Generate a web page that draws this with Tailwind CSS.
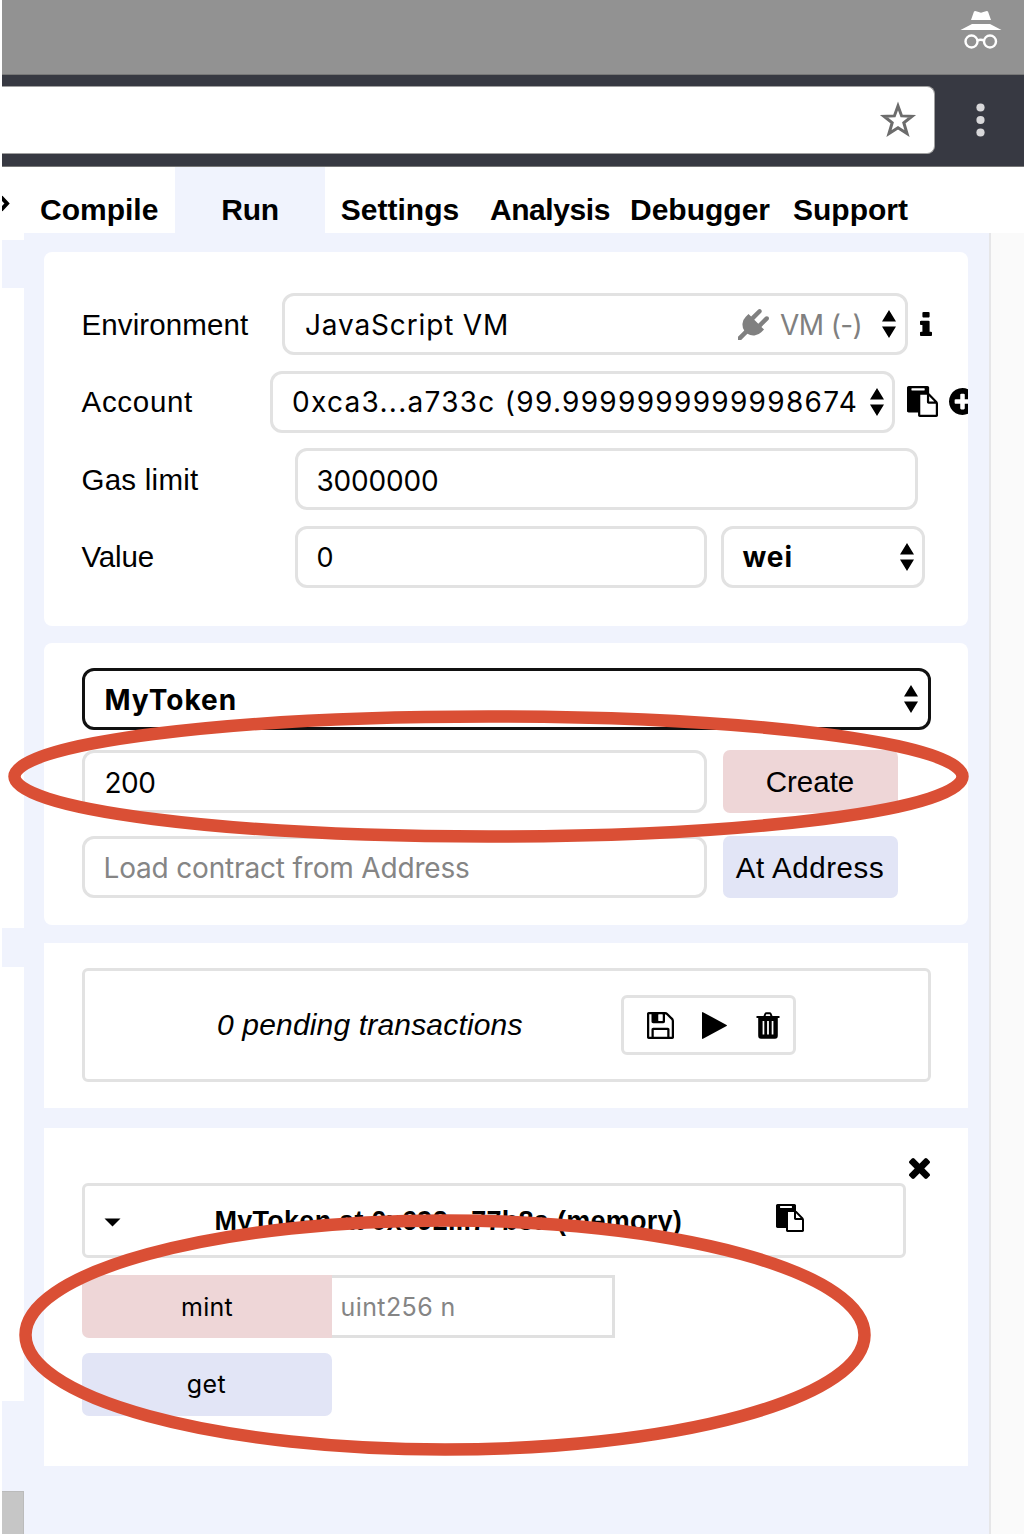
<!DOCTYPE html>
<html lang="en">
<head>
<meta charset="utf-8">
<title>Remix</title>
<script src="https://cdn.jsdelivr.net/npm/@tailwindcss/browser@4"></script>
</head>
<body class="bg-white text-black">
<svg class="hidden">
  <symbol id="sort" viewBox="0 0 14 28"><path d="M7 0L14 11.5H0zM7 28L0 16.5H14z"/></symbol>
  <symbol id="paste" viewBox="0 0 1792 1792"><path d="M768 1664h896v-640h-416q-40 0-68-28t-28-68v-416h-384v1152zm256-1440v-64q0-13-9.5-22.5t-22.5-9.5h-704q-13 0-22.5 9.5t-9.5 22.5v64q0 13 9.5 22.5t22.5 9.5h704q13 0 22.5-9.5t9.5-22.5zm256 672h299l-299-299v299zm512 128v672q0 40-28 68t-68 28h-960q-40 0-68-28t-28-68v-160h-544q-40 0-68-28t-28-68v-1344q0-40 28-68t68-28h1088q40 0 68 28t28 68v328q21 13 36 28l408 408q28 28 48 76t20 88z"/></symbol>
</svg>
<div class="relative flex h-[1534px] w-[1024px] flex-col overflow-hidden pl-[2px]">

  <!-- browser chrome -->
  <div class="flex h-[75px] shrink-0 justify-end border-b border-[#777] bg-[#929292] pt-[10px] pr-[22px]">
    <svg class="h-[40px] w-[42px]" viewBox="0 0 42 40" fill="#fff"><path d="M14 1.5Q15 .5 17 1.5L21 2.700L25 1.500Q27 .5 28 1.500L31 10H11zM12 14H30L41.500 20H.5z"/><g fill="none" stroke="#fff" stroke-width="2.400"><circle cx="11.500" cy="31.500" r="6"/><circle cx="30" cy="31.500" r="6"/><path d="M17.500 30.500Q20.700 29 24 30.500"/></g></svg>
  </div>
  <div class="flex h-[92px] shrink-0 items-center border-b border-[#777] bg-[#373942] pb-[2px]">
    <div class="mt-[1px] flex h-[68px] w-[932.500px] items-center justify-end rounded-r-[8px] border border-l-0 border-[#a0a0a0] bg-white pr-[16.500px]">
      <svg class="h-[38px] w-[38px]" viewBox="0 0 38 38" fill="none" stroke="#6c6c6c" stroke-width="3"><path d="M19 5L22.600 14.900L33 15.300L24.800 21.800L28 32.500L19 26.700L10 32.500L13.200 21.800L5 15.300L15.400 14.900z"/></svg>
    </div>
    <svg class="ml-[41.500px] h-[34px] w-[9px]" viewBox="0 0 9 34" fill="#d8d8da"><circle cx="4.500" cy="4.500" r="4.100"/><circle cx="4.500" cy="17" r="4.100"/><circle cx="4.500" cy="29.500" r="4.100"/></svg>
  </div>

  <!-- tabs -->
  <div class="flex h-[66px] shrink-0 font-['Liberation_Sans',sans-serif] text-[30px] leading-[34px] font-bold whitespace-nowrap">
    <div class="w-[23px] pt-[26px]"><svg class="h-[22px] w-[8px]" viewBox="0 0 8 22" fill="none" stroke="#000" stroke-width="4"><path d="M-1 4L5 10.500L-1 17"/></svg></div>
    <div class="w-[150px] pt-[26px] pl-[15px]">Compile</div>
    <div class="w-[150px] bg-[#f0f3fd] pt-[26px] text-center tracking-[-0.300px]">Run</div>
    <div class="w-[150px] pt-[26px] text-center">Settings</div>
    <div class="w-[150px] pt-[26px] text-center tracking-[-0.400px]">Analysis</div>
    <div class="w-[150px] pt-[26px] text-center">Debugger</div>
    <div class="w-[151px] pt-[26px] text-center">Support</div>
  </div>

  <div class="flex min-h-0 flex-1">
    <!-- editor edge -->
    <div class="flex w-[22px] shrink-0 flex-col bg-[#f0f3fd]">
      <div class="h-[7px] bg-white"></div>
      <div class="mt-[48px] h-[640px] bg-white"></div>
      <div class="mt-[39px] h-[434px] bg-white"></div>
      <div class="mt-[90px] flex-1 border-t border-r border-[#bbb] bg-[#c6c6c6]"></div>
    </div>

    <!-- run panel -->
    <div class="flex w-[965px] shrink-0 flex-col bg-[#f0f3fd] pt-[19px] pl-[20px] font-['Inter',sans-serif] text-[28px] leading-[34px] whitespace-nowrap">

      <section class="flex h-[374px] w-[924px] flex-col gap-[15.600px] overflow-hidden rounded-[8px] bg-white pt-[41px] pl-[37.500px]">
        <div class="flex h-[62px] shrink-0 items-center">
          <div class="w-[200.500px] shrink-0 pt-px font-['Liberation_Sans',sans-serif] text-[29.500px] tracking-[0.100px]">Environment</div>
          <div class="flex h-[62px] w-[626px] shrink-0 items-center rounded-[12px] border-[3px] border-[#e2e2e2] pl-[20px]">
            <span class="w-[433px] shrink-0 pt-px tracking-[0.850px]">JavaScript VM</span>
            <svg class="h-[31px] w-[31px] shrink-0" viewBox="0 0 1792 1792" fill="#808080"><path d="M1755 453q37 38 37 90.500t-37 90.500l-401 400 150 150-160 160q-163 163-389.500 186.500t-411.500-100.500l-362 362h-181v-181l362-362q-124-185-100.500-411.500t186.500-389.500l160-160 150 150 400-401q38-37 91-37t90 37 37 90.500-37 90.500l-400 401 234 234 401-400q38-37 91-37t90 37z"/></svg>
            <span class="ml-[11px] w-[102px] shrink-0 pt-px tracking-[-0.600px] text-[#808080]">VM (-)</span>
            <svg class="h-[28px] w-[14px] shrink-0"><use href="#sort"/></svg>
          </div>
          <svg class="ml-[12px] h-[24px] w-[12px] shrink-0" viewBox="576 128 640 1408" preserveAspectRatio="none"><path d="M1216 1344v128q0 26-19 45t-45 19h-512q-26 0-45-19t-19-45v-128q0-26 19-45t45-19h64v-384h-64q-26 0-45-19t-19-45v-128q0-26 19-45t45-19h384q26 0 45 19t19 45v576h64q26 0 45 19t19 45zm-128-1152v192q0 26-19 45t-45 19h-256q-26 0-45-19t-19-45v-192q0-26 19-45t45-19h256q26 0 45 19t19 45z"/></svg>
        </div>
        <div class="flex h-[62px] shrink-0 items-center">
          <div class="w-[188.500px] shrink-0 pt-px font-['Liberation_Sans',sans-serif] text-[29.500px] tracking-[0.700px]">Account</div>
          <div class="flex h-[62px] w-[625px] shrink-0 items-center rounded-[12px] border-[3px] border-[#e2e2e2] pl-[19px]">
            <span class="w-[578px] shrink-0 pt-px tracking-[1.290px]">0xca3...a733c (99.9999999999998674</span>
            <svg class="h-[28px] w-[14px] shrink-0"><use href="#sort"/></svg>
          </div>
          <svg class="ml-[12px] h-[31px] w-[31px] shrink-0"><use href="#paste"/></svg>
          <svg class="ml-[11px] h-[27px] w-[27px] shrink-0" viewBox="128 128 1536 1536"><path d="M1344 960v-128q0-26-19-45t-45-19h-256v-256q0-26-19-45t-45-19h-128q-26 0-45 19t-19 45v256h-256q-26 0-45 19t-19 45v128q0 26 19 45t45 19h256v256q0 26 19 45t45 19h128q26 0 45-19t19-45v-256h256q26 0 45-19t19-45zm320-64q0 209-103 385.500t-279.500 279.500-385.500 103-385.500-103-279.500-279.500-103-385.500 103-385.500 279.500-279.500 385.500-103 385.500 103 279.500 279.500 103 385.500z"/></svg>
        </div>
        <div class="flex h-[62px] shrink-0 items-center">
          <div class="w-[213px] pt-[2px] font-['Liberation_Sans',sans-serif] text-[29.500px] tracking-[0.250px]">Gas limit</div>
          <div class="flex h-[62px] w-[623px] items-center rounded-[12px] border-[3px] border-[#e2e2e2] pt-[3px] pl-[19px] tracking-[-0.200px]">3000000</div>
        </div>
        <div class="flex h-[62px] shrink-0 items-center">
          <div class="w-[213px] pt-px font-['Liberation_Sans',sans-serif] text-[29.500px] tracking-[-0.150px]">Value</div>
          <div class="flex h-[62px] w-[412px] items-center rounded-[12px] border-[3px] border-[#e2e2e2] pt-[3px] pl-[19px]"><span class="text-[27px]">0</span></div>
          <div class="ml-[14px] flex h-[62px] w-[204px] items-center justify-between rounded-[12px] border-[3px] border-[#e2e2e2] pr-[8px] pl-[19px] font-bold"><span class="tracking-[0.900px]">wei</span><svg class="h-[28px] w-[14px]"><use href="#sort"/></svg></div>
        </div>
      </section>

      <section class="mt-[17px] flex h-[282px] w-[924px] shrink-0 flex-col rounded-[8px] bg-white pt-[25px] pl-[37.500px]">
        <div class="flex h-[62px] w-[849px] items-center justify-between rounded-[12px] border-[3px] border-[#111] pr-[9.500px] pl-[20px] font-bold"><span class="pt-[2px] tracking-[1px]">MyToken</span><svg class="h-[28px] w-[14px]"><use href="#sort"/></svg></div>
        <div class="mt-[20px] flex gap-[16px]">
          <div class="flex h-[63px] w-[625px] items-center rounded-[12px] border-[3px] border-[#e2e2e2] pl-[20px]"><span class="pt-[2px] tracking-[-0.500px]">200</span></div>
          <div class="flex h-[63px] w-[175px] items-center justify-center rounded-[7px] bg-[#eed6d7] pt-px font-['Liberation_Sans',sans-serif] text-[29.500px]">Create</div>
        </div>
        <div class="mt-[23px] flex gap-[16px]">
          <div class="flex h-[62px] w-[625px] items-center rounded-[12px] border-[3px] border-[#e2e2e2] pt-[2px] pl-[19px] tracking-[-0.170px] text-[#858585]">Load contract from Address</div>
          <div class="flex h-[62px] w-[175px] items-center justify-center rounded-[7px] bg-[#e2e5f6] pt-px font-['Liberation_Sans',sans-serif] text-[29.500px] tracking-[0.600px]">At Address</div>
        </div>
      </section>

      <section class="mt-[18px] h-[165px] w-[924px] shrink-0 bg-white pt-[25px] pl-[38px]">
        <div class="flex h-[114px] w-[849px] items-center rounded-[6px] border-[3px] border-[#e2e2e2] pl-[132px]">
          <div class="w-[403.500px] font-['Liberation_Sans',sans-serif] text-[30px] tracking-[0.170px] italic">0 pending transactions</div>
          <div class="flex h-[60px] w-[175px] items-center rounded-[6px] border-[3px] border-[#e2e2e2] pl-[23px]">
            <svg class="h-[27px] w-[27px]" viewBox="128 128 1536 1536"><path d="M512 1536h768v-384h-768v384zm896 0h128v-896q0-14-10-38.500t-20-34.500l-281-281q-10-10-34-20t-39-10v416q0 40-28 68t-68 28h-576q-40 0-68-28t-28-68v-416h-128v1280h128v-416q0-40 28-68t68-28h832q40 0 68 28t28 68v416zm-384-928v-320q0-13-9.500-22.500t-22.500-9.500h-192q-13 0-22.500 9.500t-9.500 22.500v320q0 13 9.500 22.500t22.500 9.500h192q13 0 22.500-9.500t9.500-22.500zm640 32v928q0 40-28 68t-68 28h-1344q-40 0-68-28t-28-68v-1344q0-40 28-68t68-28h928q40 0 88 20t76 48l280 280q28 28 48 76t20 88z"/></svg>
            <svg class="ml-[28px] h-[27px] w-[25px]" viewBox="192 116 1408 1560" preserveAspectRatio="none"><path d="M1576 927l-1328 738q-23 13-39.500 3t-16.500-36v-1472q0-26 16.500-36t39.500 3l1328 738q23 13 23 31t-23 31z"/></svg>
            <svg class="ml-[29px] h-[27px] w-[24px]" viewBox="0 0 24 27"><path fill-rule="evenodd" d="M7.500 4L8.500 1.500Q9 .3 10.500 .3H13.500Q15 .3 15.500 1.500L16.500 4H23.500V6H21.800V23.500Q21.800 26.800 19 26.800H5Q2.200 26.800 2.200 23.500V6H.5V4zM9.600 4H14.400L13.800 2.300H10.200zM6.600 9V22.500H8.300V9zM11.100 9V22.500H12.900V9zM15.700 9V22.500H17.400V9z"/></svg>
          </div>
        </div>
      </section>

      <section class="mt-[20px] flex h-[338px] w-[924px] shrink-0 flex-col bg-white pt-[30px] pl-[38px] text-[25px]">
        <svg class="ml-[827px] h-[21px] w-[21px] shrink-0" viewBox="302 302 1188 1188"><path d="M1490 1322q0 40-28 68l-136 136q-28 28-68 28t-68-28l-294-294-294 294q-28 28-68 28t-68-28l-136-136q-28-28-28-68t28-68l294-294-294-294q-28-28-28-68t28-68l136-136q28-28 68-28t68 28l294 294 294-294q28-28 68-28t68 28l136 136q28 28 28 68t-28 68l-294 294 294 294q28 28 28 68z" transform="translate(0 -64)"/></svg>
        <div class="mt-[4px] flex h-[75px] w-[824px] shrink-0 items-center rounded-[6px] border-[3px] border-[#e2e2e2] pl-[19px]">
          <svg class="mt-[4px] h-[9px] w-[17px]" viewBox="0 0 17 9"><path d="M.5 .5H16.500L8.500 8.500z"/></svg>
          <div class="ml-[93.500px] w-[561.500px] font-['Liberation_Sans',sans-serif] text-[27px] font-bold tracking-[0.270px]">MyToken at 0x692...77b8a (memory)</div>
          <svg class="mb-[6px] h-[28px] w-[28px]"><use href="#paste"/></svg>
        </div>
        <div class="mt-[17px] flex shrink-0">
          <div class="flex h-[63px] w-[250px] items-center justify-center rounded-l-[7px] bg-[#eed6d7] tracking-[0.300px]">mint</div>
          <div class="flex h-[63px] w-[283px] items-center border-[3px] border-l-0 border-[#e0e0e0] pl-[8.500px] tracking-[0.400px] text-[#858585]">uint256 n</div>
        </div>
        <div class="mt-[15px] flex h-[63px] w-[250px] shrink-0 items-center justify-center rounded-[7px] bg-[#e2e5f6] pr-px pb-px tracking-[0.400px]">get</div>
      </section>
    </div>
    <div class="flex-1 border-l-[2px] border-[#e6e6e8] bg-[#fafafa]"></div>
  </div>

  <!-- hand-drawn highlights over the page -->
  <svg class="absolute top-0 left-0 h-[1534px] w-[1024px]" viewBox="0 0 1024 1534" fill="none" stroke="#da4f35" stroke-width="12.500"><ellipse cx="488.500" cy="776.500" rx="474" ry="60"/><ellipse cx="445" cy="1335" rx="419.500" ry="114.500"/></svg>
</div>
</body>
</html>
